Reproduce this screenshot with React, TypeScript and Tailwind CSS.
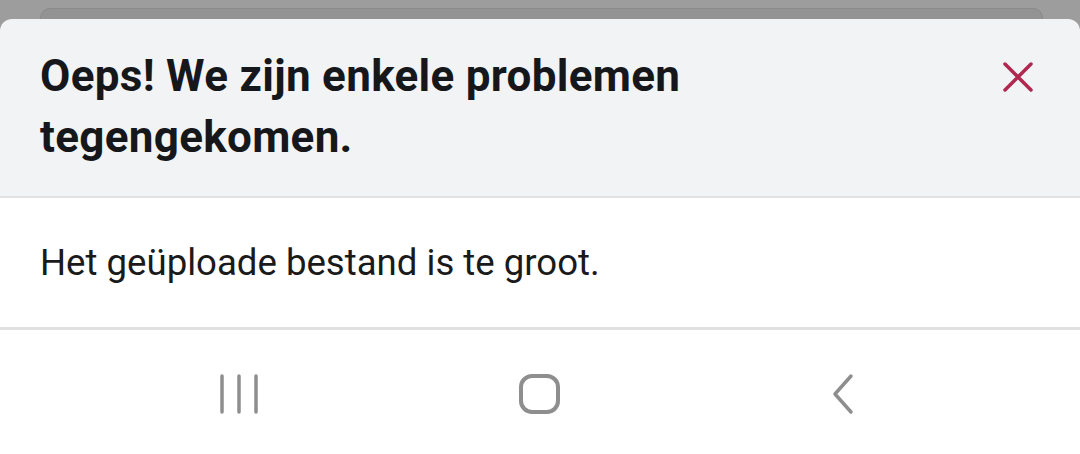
import React from "react";

export default function App() {
  return (
    <div className="w-[1080px] h-[454px] flex flex-col bg-white overflow-hidden" style={{ fontFamily: "Roboto, 'Noto Sans', sans-serif" }}>
      <div className="bg-[#9d9d9d] flex flex-col">
        <div className="h-[8px]" />
        <div className="relative">
          <div className="absolute left-[40px] right-[37px] top-0 h-[20px] rounded-t-[10px] bg-[#939393] border border-[#8a8a8a]" />
          <div className="relative mt-[11px] rounded-t-[12px] bg-[#f2f3f5] flex items-start justify-between pl-[40px] pr-[47px] pt-[27px] pb-[28px] border-b-2 border-[#e2e2e2]">
            <h1 className="text-[44px] leading-[61px] font-bold text-[#16171a] w-[760px] tracking-[0.3px]">
              Oeps! We zijn enkele problemen tegengekomen.
            </h1>
            <svg width="30" height="30" viewBox="0 0 30 30" className="mt-[16px]">
              <path d="M2 2 L28 28 M28 2 L2 28" stroke="#b02850" strokeWidth="3.5" strokeLinecap="round" />
            </svg>
          </div>
        </div>
      </div>
      <div className="bg-white rounded-b-[12px] pl-[40px] h-[129px] flex items-start pt-[43px]">
        <p className="text-[36.6px] leading-[44px] text-[#1a1a1a]">Het geüploade bestand is te groot.</p>
      </div>
      <div className="h-[3px] bg-[#e0e0e0]" />
      <div className="flex-1 bg-white flex items-start pt-[43px]">
        <div className="w-[480px] flex justify-center">
          <svg width="44" height="42" viewBox="0 0 44 42">
            <path d="M4 3 V39 M21 3 V39 M38 3 V39" stroke="#8e8e8e" strokeWidth="3.5" strokeLinecap="round" />
          </svg>
        </div>
        <div className="w-[120px] flex justify-center">
          <svg width="44" height="42" viewBox="0 0 44 42">
            <rect x="3" y="3" width="37" height="36" rx="11" fill="none" stroke="#8e8e8e" strokeWidth="4" />
          </svg>
        </div>
        <div className="flex-1 flex justify-start pl-[226px]">
          <svg width="30" height="42" viewBox="0 0 30 42">
            <path d="M25 3 L9 21 L25 39" fill="none" stroke="#8e8e8e" strokeWidth="3.5" strokeLinecap="round" strokeLinejoin="round" />
          </svg>
        </div>
      </div>
    </div>
  );
}
